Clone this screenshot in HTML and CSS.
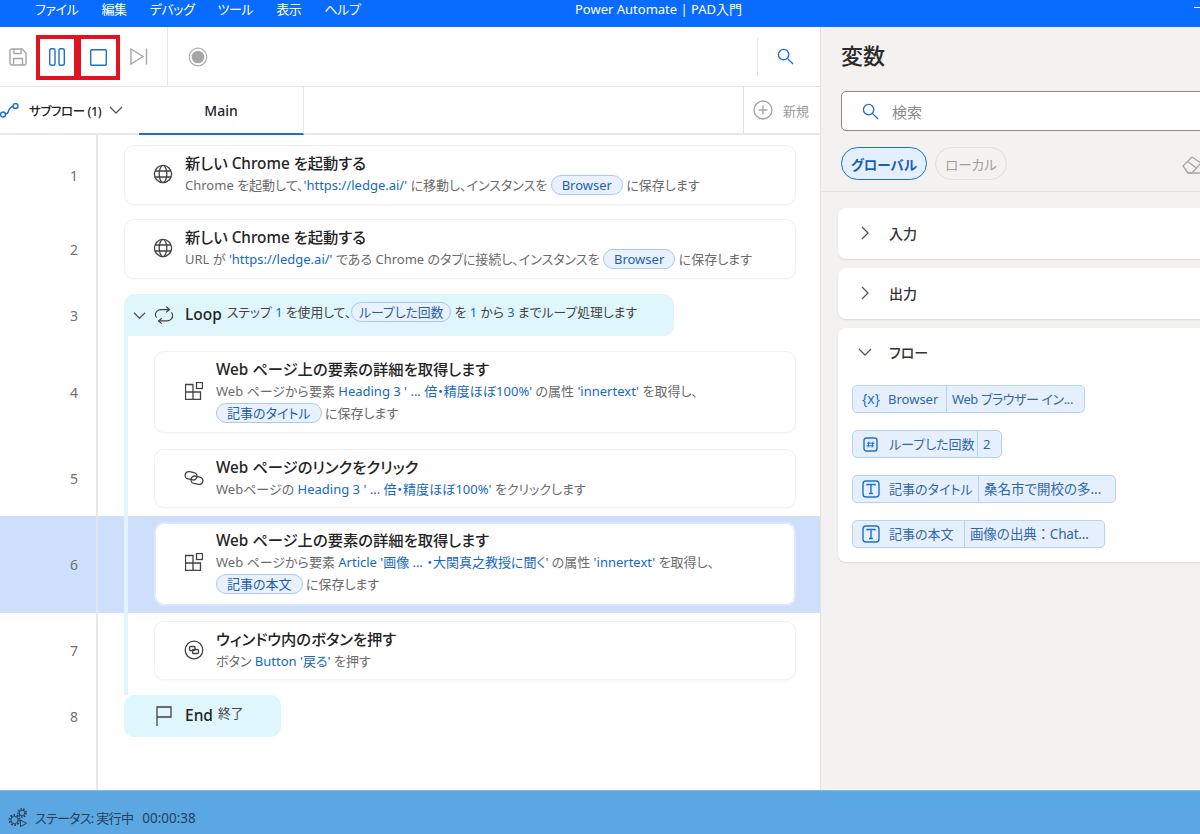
FILE: index.html
```html
<!DOCTYPE html>
<html lang="ja">

<head>
  <meta charset="UTF-8">
  <meta name="viewport" content="width=device-width, initial-scale=1.0">
  <title>Power Automate | PAD入門</title>
  <link rel="stylesheet" href="styles.css">
</head>

<body>
  <!-- Icônes réutilisées -->
  <svg class="icon-defs" aria-hidden="true">
    <symbol id="i-globe" viewBox="0 0 20 20"><circle cx="10" cy="10" r="8.6"/><ellipse cx="10" cy="10" rx="3.8" ry="8.6"/><path d="M2 7h16M2 13h16"/></symbol>
    <symbol id="i-loop" viewBox="0 0 22 20"><path d="M3 13A6.5 6.5 0 0 1 1.500 10 6 6 0 0 1 7.500 4H17"/><path d="M13.500 1l3.500 3-3.500 3"/><path d="M19 7a6 6 0 0 1 1.500 3.500 6 6 0 0 1-6 6H5"/><path d="M8.500 13.500l-3.500 3 3.500 3"/></symbol>
    <symbol id="i-blocks" viewBox="0 0 18 18"><path d="M.5 2.500H8V10h7.500v7.500H.5zM.5 10H8v7.500"/><rect x="11.500" y=".5" width="6" height="6"/></symbol>
    <symbol id="i-link" viewBox="0 0 20 16"><rect x="1" y="2" width="12" height="7.500" rx="3.750" transform="rotate(12 7 6)"/><rect x="7" y="6.500" width="12" height="7.500" rx="3.750" transform="rotate(12 13 10)"/></symbol>
    <symbol id="i-button" viewBox="0 0 20 20"><circle cx="10" cy="10" r="8.800"/><rect x="5.500" y="6.500" width="5.500" height="4" rx="1"/><rect x="8.500" y="9.500" width="6" height="4" rx="1"/></symbol>
    <symbol id="i-search" viewBox="0 0 18 18"><circle cx="7" cy="7" r="5.500"/><path d="M11 11l6 6"/></symbol>
    <symbol id="i-chevron" viewBox="0 0 14 14"><path d="M1 4l6 6 6-6"/></symbol>
    <symbol id="i-chevron-r" viewBox="0 0 14 14"><path d="M4 1l6 6-6 6"/></symbol>
    <symbol id="i-text" viewBox="0 0 18 18"><rect x="1" y="1" width="16" height="16" rx="3"/><path d="M5 5.500V4.500h8v1M9 4.500v9M7 13.500h4"/></symbol>
  </svg>

  <!-- Barre de titre -->
  <header class="title-bar">
    <nav class="menu">
      <span>ファイル</span>
      <span>編集</span>
      <span>デバッグ</span>
      <span>ツール</span>
      <span>表示</span>
      <span>ヘルプ</span>
    </nav>
    <div class="app-title">Power Automate | PAD入門</div>
    <div class="win-min"></div>
  </header>

  <div class="workspace">
    <main class="editor">
      <!-- Barre d'outils -->
      <div class="toolbar">
        <button class="tool tool-save">
          <svg class="svg-gray" width="18" height="18" viewBox="0 0 18 18"><path d="M1 3a2 2 0 0 1 2-2h10l4 4v10a2 2 0 0 1-2 2H3a2 2 0 0 1-2-2z"/><path d="M5 1v4.500h7V1M4.500 17v-6.500h9V17"/></svg>
        </button>
        <button class="tool tool-marked">
          <svg class="svg-blue" width="16" height="18" viewBox="0 0 16 18"><rect x=".7" y=".7" width="5.300" height="16.600" rx="1.500"/><rect x="10" y=".7" width="5.300" height="16.600" rx="1.500"/></svg>
        </button>
        <button class="tool tool-marked">
          <svg class="svg-blue" width="17" height="17" viewBox="0 0 17 17"><rect x=".7" y=".7" width="15.600" height="15.600" rx="1"/></svg>
        </button>
        <button class="tool tool-next">
          <svg class="svg-gray" width="18" height="17" viewBox="0 0 18 17"><path d="M1 1l12 7.500L1 16z"/><path d="M16.500 .5v16"/></svg>
        </button>
        <div class="tool-record">
          <svg width="20" height="20" viewBox="0 0 20 20"><circle cx="10" cy="10" r="8.800" fill="none" stroke="#b0b0b0" stroke-width="1.200"/><circle cx="10" cy="10" r="6.300" fill="#a6a6a6" stroke="none"/></svg>
        </div>
        <div class="tool-search">
          <svg class="svg-blue" width="17" height="17"><use href="#i-search"/></svg>
        </div>
      </div>

      <!-- Onglets -->
      <div class="tabs">
        <div class="subflow">
          <svg class="svg-blue subflow-icon" width="19" height="15" viewBox="0 0 19 15"><circle cx="3" cy="11.500" r="2.500"/><circle cx="15.500" cy="3" r="2.500"/><path d="M5.500 11c3 0 2.500-3 4-5s2.500-2.500 3.500-2.700"/></svg>
          <span class="subflow-label">サブフロー (1)</span>
          <svg class="svg-dark" width="14" height="14"><use href="#i-chevron"/></svg>
        </div>
        <div class="tab-main">Main</div>
        <div class="tab-new">
          <svg class="svg-gray" width="20" height="20" viewBox="0 0 20 20"><circle cx="10" cy="10" r="9"/><path d="M10 5.500v9M5.500 10h9"/></svg>
          <span>新規</span>
        </div>
      </div>

      <!-- Liste des actions -->
      <div class="flow">
        <div class="row row-first">
          <div class="row-num">1</div>
          <div class="row-body">
            <div class="card card-loose">
              <svg class="card-icon"><use href="#i-globe"/></svg>
              <div class="card-text">
                <div class="card-title">新しい Chrome を起動する</div>
                <div class="card-desc">Chrome を起動して、<a>'https://ledge.ai/'</a> に移動し、インスタンスを <span class="token">Browser</span> に保存します</div>
              </div>
            </div>
          </div>
        </div>

        <div class="row row-second">
          <div class="row-num">2</div>
          <div class="row-body">
            <div class="card card-loose">
              <svg class="card-icon"><use href="#i-globe"/></svg>
              <div class="card-text">
                <div class="card-title">新しい Chrome を起動する</div>
                <div class="card-desc">URL が <a>'https://ledge.ai/'</a> である Chrome のタブに接続し、インスタンスを <span class="token">Browser</span> に保存します</div>
              </div>
            </div>
          </div>
        </div>

        <div class="row row-block">
          <div class="row-num">3</div>
          <div class="row-body">
            <div class="block block-loop">
              <svg class="block-chevron"><use href="#i-chevron"/></svg>
              <svg class="block-icon"><use href="#i-loop"/></svg>
              <span class="block-name">Loop</span>
              <span class="block-desc">ステップ <a>1</a> を使用して、<span class="token">ループした回数</span> を <a>1</a> から <a>3</a> までループ処理します</span>
            </div>
          </div>
        </div>

        <div class="row row-fourth nested">
          <div class="row-num">4</div>
          <div class="row-body">
            <div class="card card-loose">
              <svg class="card-icon icon-small"><use href="#i-blocks"/></svg>
              <div class="card-text">
                <div class="card-title">Web ページ上の要素の詳細を取得します</div>
                <div class="card-desc">Web ページから要素 <a>Heading 3 ' ... 倍・精度ほぼ100%'</a> の属性 <a>'innertext'</a> を取得し、<br><span class="token">記事のタイトル</span> に保存します</div>
              </div>
            </div>
          </div>
        </div>

        <div class="row nested">
          <div class="row-num">5</div>
          <div class="row-body">
            <div class="card">
              <svg class="card-icon"><use href="#i-link"/></svg>
              <div class="card-text">
                <div class="card-title">Web ページのリンクをクリック</div>
                <div class="card-desc">Webページの <a>Heading 3 ' ... 倍・精度ほぼ100%'</a> をクリックします</div>
              </div>
            </div>
          </div>
        </div>

        <div class="row row-selected nested">
          <div class="row-num">6</div>
          <div class="row-body">
            <div class="card">
              <svg class="card-icon icon-small"><use href="#i-blocks"/></svg>
              <div class="card-text">
                <div class="card-title">Web ページ上の要素の詳細を取得します</div>
                <div class="card-desc">Web ページから要素 <a>Article '画像 ... ・大関真之教授に聞く'</a> の属性 <a>'innertext'</a> を取得し、<br><span class="token">記事の本文</span> に保存します</div>
              </div>
            </div>
          </div>
        </div>

        <div class="row row-seventh nested">
          <div class="row-num">7</div>
          <div class="row-body">
            <div class="card">
              <svg class="card-icon"><use href="#i-button"/></svg>
              <div class="card-text">
                <div class="card-title">ウィンドウ内のボタンを押す</div>
                <div class="card-desc">ボタン <a>Button '戻る'</a> を押す</div>
              </div>
            </div>
          </div>
        </div>

        <div class="row row-block">
          <div class="row-num">8</div>
          <div class="row-body">
            <div class="block block-end">
              <svg class="block-icon flag" viewBox="0 0 16 20"><path d="M1 20V1h14v10H1"/></svg>
              <span class="block-name">End</span>
              <span class="block-desc">終了</span>
            </div>
          </div>
        </div>

        <div class="gutter-fill"></div>
      </div>
    </main>

    <!-- Panneau des variables -->
    <aside class="vars">
      <h2 class="vars-title">変数</h2>
      <div class="vars-search">
        <svg class="svg-blue" width="17" height="17"><use href="#i-search"/></svg>
        <span>検索</span>
      </div>
      <div class="vars-filter">
        <span class="pill pill-on">グローバル</span>
        <span class="pill pill-off">ローカル</span>
        <svg class="eraser" width="22" height="20" viewBox="0 0 22 20"><path d="M1 11L10 2l9 6-9 10H6z"/><path d="M5.500 6.500l9 6.500M6 18h14"/></svg>
      </div>

      <div class="vars-groups">
        <section class="group">
          <div class="group-head">
            <svg class="svg-dark" width="14" height="14"><use href="#i-chevron-r"/></svg>
            <span>入力</span>
          </div>
        </section>
        <section class="group">
          <div class="group-head">
            <svg class="svg-dark" width="14" height="14"><use href="#i-chevron-r"/></svg>
            <span>出力</span>
          </div>
        </section>
        <section class="group group-open">
          <div class="group-head">
            <svg class="svg-dark" width="14" height="14"><use href="#i-chevron"/></svg>
            <span>フロー</span>
          </div>
          <div class="chip-list">
            <div class="chip">
              <div class="chip-name name-browser"><span class="chip-glyph">{x}</span>Browser</div>
              <div class="chip-value value-browser">Web ブラウザー イン...</div>
            </div>
            <div class="chip">
              <div class="chip-name name-count">
                <svg class="svg-blue chip-svg" width="15" height="15" viewBox="0 0 15 15"><rect x="1" y="1" width="13" height="13" rx="2.500"/><path class="thin" d="M6 4.500l-1 6M10 4.500l-1 6M4 6.200h7.500M3.500 8.800H11"/></svg>
                ループした回数
              </div>
              <div class="chip-value">2</div>
            </div>
            <div class="chip">
              <div class="chip-name name-title"><svg class="svg-blue chip-svg" width="18" height="18"><use href="#i-text"/></svg>記事のタイトル</div>
              <div class="chip-value value-title">桑名市で開校の多...</div>
            </div>
            <div class="chip">
              <div class="chip-name name-body"><svg class="svg-blue chip-svg" width="18" height="18"><use href="#i-text"/></svg>記事の本文</div>
              <div class="chip-value value-body">画像の出典：Chat...</div>
            </div>
          </div>
        </section>
      </div>
    </aside>
  </div>

  <!-- Barre d'état -->
  <footer class="status">
    <svg class="status-icon" width="20" height="19" viewBox="0 0 20 19"><circle cx="6.500" cy="12" r="5" stroke-width="2" stroke-dasharray="1.600 1.540"/><circle cx="6.500" cy="12" r="3.600"/><circle cx="14" cy="5" r="4" stroke-width="1.800" stroke-dasharray="1.400 1.400"/><circle cx="14" cy="5" r="2.800"/><path d="M12.500 12l6 3.300-6 3.300z"/></svg>
    <span class="status-label">ステータス: 実行中</span>
    <span class="status-time">00:00:38</span>
  </footer>
</body>

</html>
```

FILE: styles.css
```css
/* Styles généraux */
body {
  font-family: "Noto Sans", "Noto Sans CJK JP", sans-serif;
  font-feature-settings: "palt";
  margin: 0;
  height: 834px;
  overflow: hidden;
  display: flex;
  flex-direction: column;
  background-color: white;
  color: #242424;
}

.icon-defs {
  display: none;
}

svg {
  fill: none;
  stroke: #424242;
  stroke-width: 1.3;
  flex-shrink: 0;
}

.svg-blue {
  stroke: #1f6fd1;
  stroke-width: 1.4;
}

.svg-gray {
  stroke: #a6a6a6;
  stroke-width: 1.4;
}

.svg-dark {
  stroke: #555;
  stroke-width: 1.3;
}

.thin {
  stroke-width: 1;
}

/* Barre de titre */
.title-bar {
  height: 27px;
  flex-shrink: 0;
  display: flex;
  background-color: #0a6cff;
  color: white;
  font-size: 13px;
  line-height: 18px;
}

.menu {
  width: 575px;
  flex-shrink: 0;
  box-sizing: border-box;
  padding-left: 35px;
  display: flex;
  gap: 23px;
  letter-spacing: -0.4px;
}

.app-title {
  flex: 1;
}

.win-min {
  width: 6px;
  height: 1px;
  margin-top: 7px;
  background-color: white;
}

.workspace {
  flex: 1;
  min-height: 0;
  display: flex;
}

/* Zone principale */
.editor {
  width: 820px;
  flex-shrink: 0;
  display: flex;
  flex-direction: column;
}

.toolbar {
  height: 60px;
  flex-shrink: 0;
  box-sizing: border-box;
  border-bottom: 1px solid #e6e6e6;
  display: flex;
  align-items: center;
}

.tool {
  background: none;
  border: none;
  padding: 0;
  display: flex;
  justify-content: center;
  align-items: center;
}

.tool-save {
  width: 36px;
}

.tool-marked {
  width: 42px;
  height: 45px;
  margin-top: 1px;
  box-sizing: border-box;
  border: 4px solid #df1420;
}

.tool-marked + .tool-marked {
  margin-left: -1px;
  width: 43px;
}

.tool-next {
  width: 37px;
}

.tool-record {
  margin-left: 10px;
  height: 100%;
  box-sizing: border-box;
  border-left: 1px solid #e6e6e6;
  padding-left: 20px;
  display: flex;
  align-items: center;
}

.tool-search {
  margin-left: auto;
  margin-right: 26px;
  height: 38px;
  border-left: 1px solid #e6e6e6;
  padding-left: 19px;
  display: flex;
  align-items: center;
}

/* Onglets */
.tabs {
  height: 48px;
  flex-shrink: 0;
  box-sizing: border-box;
  border-bottom: 2px solid #e8e8e8;
  display: flex;
  font-size: 13px;
  font-weight: 500;
}

.subflow {
  width: 138px;
  flex-shrink: 0;
  display: flex;
  align-items: center;
}

.subflow-label {
  margin: 0 8px 0 10px;
  font-size: 12.5px;
  letter-spacing: -0.4px;
}

.tab-main {
  width: 165px;
  margin-left: 1px;
  margin-bottom: -2px;
  box-sizing: border-box;
  border-bottom: 2px solid #1f6fd1;
  border-right: 1px solid #e8e8e8;
  display: flex;
  justify-content: center;
  align-items: center;
  font-size: 14px;
}

.tab-new {
  margin-left: auto;
  width: 77px;
  box-sizing: border-box;
  border-left: 1px solid #e0e0e0;
  padding-left: 9px;
  display: flex;
  align-items: center;
  gap: 10px;
  color: #9a9a9a;
  font-weight: 400;
}

/* Liste des actions */
.flow {
  flex: 1;
  min-height: 0;
  display: flex;
  flex-direction: column;
}

.row {
  --pt: 8px;
  --pb: 8px;
  display: flex;
  flex-shrink: 0;
}

.row-first {
  --pt: 10px;
  --pb: 7px;
}

.row-second {
  --pt: 7px;
  --pb: 15px;
}

.row-block {
  --pt: 0px;
  --pb: 0px;
}

.row-fourth {
  --pt: 15px;
}

.row-seventh {
  --pb: 15px;
}

.row-selected {
  --pt: 6px;
  --pb: 7px;
  background-color: #cddffb;
}

.row-num {
  width: 98px;
  flex-shrink: 0;
  box-sizing: border-box;
  border-right: 2px solid #e8e8e8;
  padding: var(--pt) 18px var(--pb) 0;
  display: flex;
  justify-content: flex-end;
  align-items: center;
  font-size: 14px;
  color: #707070;
}

.row-body {
  flex: 1;
  min-width: 0;
  padding: var(--pt) 24px var(--pb) 26px;
}

.nested .row-body {
  margin-left: 26px;
  border-left: 4px solid #dff7fc;
}

.row-selected .row-num {
  border-right-color: #e1e6ee;
}

.gutter-fill {
  flex: 1;
  width: 98px;
  box-sizing: border-box;
  border-right: 2px solid #e8e8e8;
}

.card {
  box-sizing: border-box;
  min-height: 59px;
  border: 1px solid #f1f1f1;
  border-radius: 10px;
  padding: 6px 8px 7px 0;
  display: flex;
  align-items: center;
  background-color: white;
  box-shadow: 0 1px 2px rgba(0, 0, 0, 0.03);
}

.card-loose {
  padding-bottom: 8px;
}

.row-selected .card {
  border-color: #dbe7fa;
  padding-bottom: 10px;
  box-shadow: inset 0 0 0 1px #dbe7fa;
}

.card-icon {
  width: 20px;
  height: 20px;
  margin: 0 12px 0 28px;
}

.nested .card-icon {
  margin-left: 29px;
}

.nested .icon-small {
  width: 18px;
  height: 18px;
  margin: 0 13px 0 30px;
}

.card-title {
  font-size: 15.3px;
  font-weight: 500;
  line-height: 22px;
  color: #242424;
}

.card-desc {
  font-size: 13px;
  line-height: 22px;
  color: #6b6b6b;
}

a {
  color: #1668c7;
}

.token {
  display: inline-block;
  box-sizing: border-box;
  height: 20px;
  line-height: 18px;
  padding: 0 10px;
  border: 1px solid #a9c9f2;
  border-radius: 10px;
  background-color: #e8f1fd;
  color: #235fae;
  font-size: 13px;
}

/* Blocs Loop / End */
.block {
  box-sizing: border-box;
  height: 42px;
  display: flex;
  align-items: center;
  background-color: #dff7fc;
}

.block-loop {
  width: 550px;
  border-radius: 10px 10px 10px 0;
}

.block-end {
  width: 157px;
  border-radius: 10px;
}

.block-chevron {
  width: 13px;
  height: 13px;
  margin-left: 9px;
  stroke: #555;
}

.block-icon {
  width: 20px;
  height: 20px;
  margin: 0 11px 0 8px;
}

.flag {
  width: 16px;
  margin: 0 13px 0 32px;
}

.block-name {
  font-size: 15.5px;
  font-weight: 500;
  margin: 0 5px 2px 0;
}

.block-desc {
  font-size: 12.8px;
  color: #444;
  margin-bottom: 7px;
}

.block-desc .token {
  padding: 0 7px;
  font-size: 12.8px;
}

/* Panneau des variables */
.vars {
  flex: 1;
  min-width: 0;
  overflow: hidden;
  box-sizing: border-box;
  border-left: 1px solid #e2e2e2;
  background-color: #f3f2f1;
  padding-left: 20px;
}

.vars-title {
  margin: 13px 0 0;
  font-size: 22px;
  font-weight: 500;
  line-height: 30px;
  color: #2b2b2b;
}

.vars-search {
  width: 400px;
  height: 40px;
  margin-top: 21px;
  box-sizing: border-box;
  border: 1px solid #8a8a8a;
  border-radius: 5px;
  background-color: white;
  padding-left: 20px;
  display: flex;
  align-items: center;
  gap: 13px;
  font-size: 15px;
  color: #8a8a8a;
}

.vars-filter {
  height: 61px;
  width: 400px;
  margin-left: -20px;
  padding-left: 20px;
  box-sizing: border-box;
  border-bottom: 1px solid #e4e4e4;
  display: flex;
  align-items: flex-start;
  gap: 8px;
  padding-top: 16px;
}

.pill {
  box-sizing: border-box;
  height: 33px;
  flex-shrink: 0;
  border: 1px solid #dfdfdf;
  border-radius: 17px;
  display: flex;
  justify-content: center;
  align-items: center;
  white-space: nowrap;
  font-size: 13.5px;
  color: #a0a0a0;
}

.pill-on {
  width: 86px;
  border-color: #1f6fd1;
  background-color: #e3effd;
  color: #1b5fb5;
  font-weight: 600;
}

.pill-off {
  width: 72px;
}

.eraser {
  margin: 8px 0 0 167px;
  stroke: #a6a6a6;
}

.vars-groups {
  margin: 16px 0 0 -3px;
  width: 400px;
  display: flex;
  flex-direction: column;
  gap: 9px;
}

.group {
  background-color: white;
  border-radius: 8px;
  box-shadow: 0 1px 2px rgba(0, 0, 0, 0.1);
}

.group-head {
  height: 51px;
  box-sizing: border-box;
  padding: 0 0 2px 20px;
  display: flex;
  align-items: center;
  gap: 17px;
  font-size: 14px;
  font-weight: 500;
  color: #333;
}

.group-open {
  height: 234px;
}

.group-open .group-head {
  height: 49px;
}

.chip-list {
  margin: 8px 0 0 14px;
  display: flex;
  flex-direction: column;
  align-items: flex-start;
  gap: 17px;
}

.chip {
  height: 28px;
  box-sizing: border-box;
  border: 1px solid #b6d2f6;
  border-radius: 5px;
  background-color: #e6f0fd;
  display: flex;
  font-size: 13px;
  line-height: 26px;
  color: #2f66ad;
}

.chip-name {
  box-sizing: border-box;
  padding-left: 9px;
  border-right: 1px solid #b6d2f6;
  display: flex;
  align-items: center;
  white-space: nowrap;
}

.name-browser {
  width: 94px;
}

.name-count {
  width: 125px;
  padding-left: 10px;
}

.name-count .chip-svg {
  margin-right: 11px;
}

.name-title {
  width: 126px;
}

.name-body {
  width: 112px;
}

.chip-glyph {
  width: 17px;
  margin-right: 9px;
  font-size: 14px;
  color: #1f6fd1;
}

.chip-svg {
  margin-right: 9px;
}

.chip-value {
  padding: 0 11px 0 5px;
  white-space: nowrap;
}

.value-browser {
  letter-spacing: -0.4px;
}

.value-title {
  font-size: 13.5px;
  padding-right: 14px;
}

.value-body {
  font-size: 13.5px;
  font-feature-settings: normal;
  letter-spacing: -0.2px;
  padding-right: 15px;
}

/* Barre d'état */
.status {
  height: 44px;
  flex-shrink: 0;
  box-sizing: border-box;
  border-top: 1px solid #7ebbe9;
  background-color: #5aa7e2;
  padding: 10px 0 0 8px;
  display: flex;
  align-items: center;
  font-size: 13px;
  color: #25405c;
}

.status-icon {
  margin-right: 7px;
  stroke: #25405c;
  stroke-width: 1;
}

.status-label {
  letter-spacing: -0.7px;
}

.status-time {
  margin-left: 9px;
  font-size: 13.500px;
}
```
